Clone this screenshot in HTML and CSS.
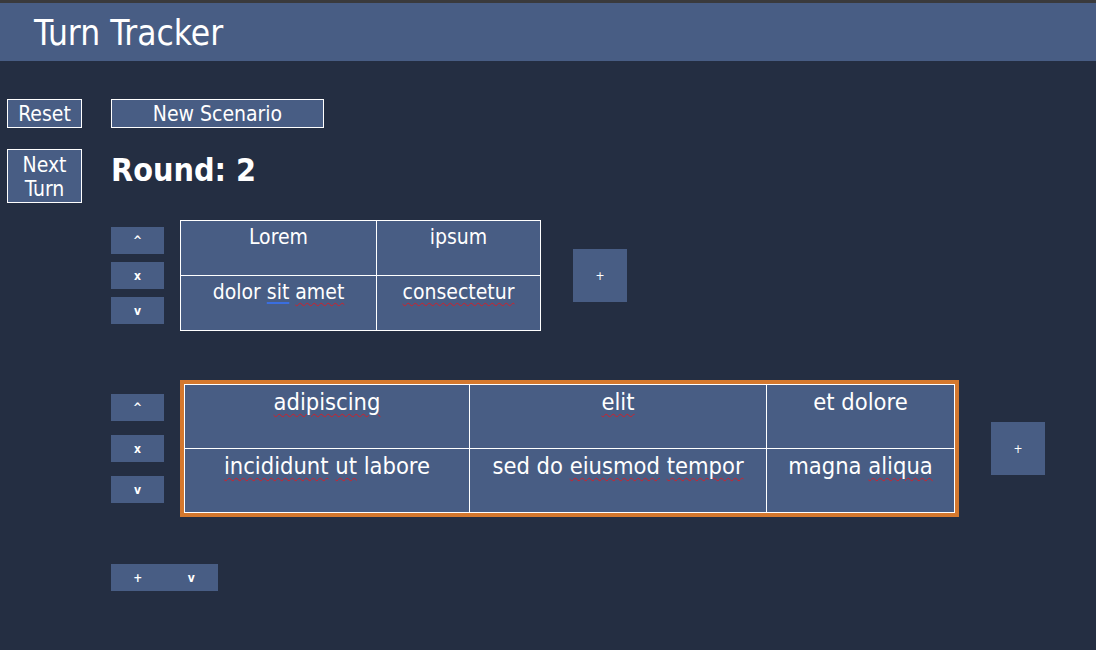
FILE: index.html
```html
<!DOCTYPE html>
<html>
<head>
<meta charset="utf-8">
<title>Turn Tracker</title>
<link rel="stylesheet" href="styles.css">
</head>
<body>
<header class="topbar"><h1 class="title">Turn Tracker</h1></header>
<main class="page">
  <aside class="sidebar">
    <button class="btn btn-reset">Reset</button>
    <button class="btn btn-next">Next<br>Turn</button>
  </aside>
  <section class="content">
    <button class="btn btn-scenario">New Scenario</button>
    <h2 class="round">Round: 2</h2>

    <div class="turn">
      <div class="controls">
        <button class="mini">^</button>
        <button class="mini">x</button>
        <button class="mini">v</button>
      </div>
      <div class="grid grid-small">
        <div class="cell">Lorem</div>
        <div class="cell">ipsum</div>
        <div class="cell">dolor <span class="grammar">sit</span> <span class="spell">amet</span></div>
        <div class="cell"><span class="spell">consectetur</span></div>
      </div>
      <button class="add">+</button>
    </div>

    <div class="turn turn-active">
      <div class="controls controls-lg">
        <button class="mini">^</button>
        <button class="mini">x</button>
        <button class="mini">v</button>
      </div>
      <div class="frame">
        <div class="grid grid-large">
          <div class="cell"><span class="spell">adipiscing</span></div>
          <div class="cell"><span class="spell">elit</span></div>
          <div class="cell">et dolore</div>
          <div class="cell"><span class="spell">incididunt</span> <span class="spell">ut</span> labore</div>
          <div class="cell">sed do <span class="spell">eiusmod</span> <span class="spell">tempor</span></div>
          <div class="cell">magna <span class="spell">aliqua</span></div>
        </div>
      </div>
      <button class="add">+</button>
    </div>

    <div class="bottombar">
      <button class="mini">+</button>
      <button class="mini">v</button>
    </div>
  </section>
</main>
</body>
</html>
```
FILE: styles.css
```css
* { box-sizing: border-box; }
html, body {
  margin: 0;
  padding: 0;
  background: #242e42;
  color: #ffffff;
  font-family: "DejaVu Sans Condensed", "DejaVu Sans", sans-serif;
  height: 650px;
  overflow: hidden;
}
.topbar {
  border-top: 3px solid #3a3a3c;
  background: #485d84;
  height: 61px;
  padding-left: 34px;
  padding-top: 2px;
  display: flex;
  align-items: center;
}
.title {
  margin: 0;
  font-weight: normal;
  font-size: 35px;
  line-height: 1;
}
.page {
  display: flex;
  padding: 38px 0 0 7px;
  gap: 29px;
}
.sidebar {
  display: flex;
  flex-direction: column;
  gap: 21px;
  width: 75px;
}
.btn {
  font-family: inherit;
  color: #fff;
  background: #485d84;
  border: 1px solid #ffffff;
  font-size: 21px;
  padding: 1px 0 0;
  line-height: 24px;
  margin: 0;
}
.btn-reset { width: 75px; height: 29px; }
.btn-next { width: 75px; height: 54px; line-height: 24px; padding-top: 1px; }
.btn-scenario { width: 213px; height: 29px; }
.content {
  display: flex;
  flex-direction: column;
  align-items: flex-start;
}
.round {
  margin: 24px 0 31px 0;
  font-size: 32px;
  line-height: 37px;
  font-weight: bold;
}
.turn {
  display: flex;
  align-items: center;
}
.turn + .turn { margin-top: 49px; }
.controls {
  display: flex;
  flex-direction: column;
  gap: 8px;
  margin-right: 16px;
}
.controls-lg { gap: 14px; }
.mini {
  width: 53px;
  height: 27px;
  background: #485d84;
  color: #fff;
  border: none;
  padding: 0;
  margin: 0;
  font-family: inherit;
  font-size: 12px;
  font-weight: bold;
}
.grid {
  display: grid;
  background: #ffffff;
  border: 1px solid #ffffff;
  gap: 1px;
}
.grid-small {
  grid-template-columns: 195px 163px;
  grid-template-rows: 54px 54px;
  font-size: 21px;
}
.grid-large {
  grid-template-columns: 284px 296px 187px;
  grid-template-rows: 63px 63px;
  font-size: 23.5px;
}
.cell {
  background: #485d84;
  text-align: center;
  padding-top: 4px;
  line-height: 1.15;
}
.frame {
  border: 4px solid #d4782e;
}
.add {
  width: 54px;
  height: 53px;
  margin-left: 32px;
  background: #485d84;
  color: #fff;
  border: none;
  padding: 0;
  font-family: inherit;
  font-size: 12px;
}
.spell {
  text-decoration: underline wavy #d0202a;
  text-decoration-thickness: 1px;
  text-underline-offset: 3px;
}
.grammar {
  text-decoration: underline #3a6ee0;
  text-underline-offset: 3px;
}
.bottombar {
  display: flex;
  margin-top: 47px;
}
.bottombar .mini { width: 53.5px; height: 27px; }
```
